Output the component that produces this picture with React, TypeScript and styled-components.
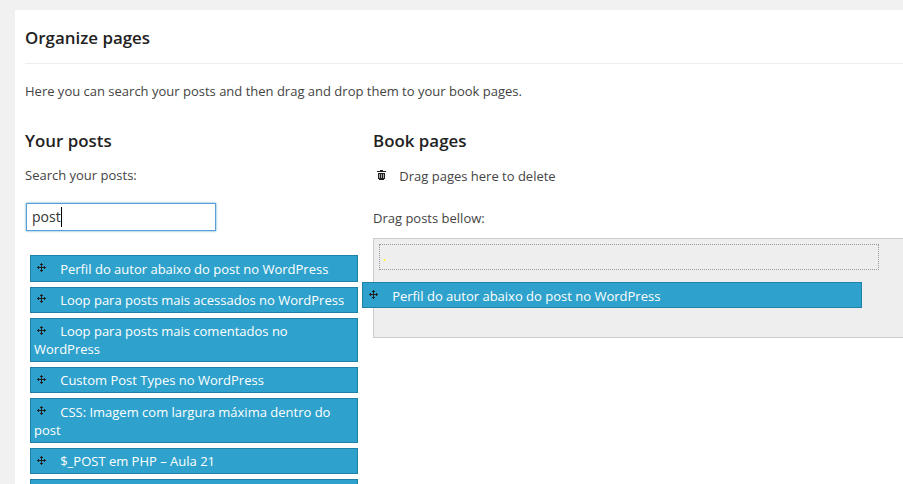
import React from 'react';
import styled, { createGlobalStyle } from 'styled-components';

const GlobalStyle = createGlobalStyle`
  * { box-sizing: border-box; }
  html, body { margin: 0; background: #f1f1f1; overflow: hidden; }
  body { font: 13px/18.2px 'Open Sans', sans-serif; color: #444; }
`;

const Page = styled.div`
  height: 484px;
  padding: 10px 0 0 15px;
  overflow: hidden;
`;

const Panel = styled.main`
  height: 800px;
  padding: 0 0 0 10px;
  background: #fff;
`;

const PanelHeader = styled.header`
  height: 54px;
  padding-top: 16px;
  border-bottom: 1px solid #eee;
`;

const Heading = styled.h2`
  margin: 0;
  color: #222;
  font-size: 16.9px;
  font-weight: 600;
  line-height: 24px;
`;

const Intro = styled.p`
  margin: 18px 0 0;
`;

const Columns = styled.div`
  display: grid;
  grid-template-columns: 333px 1fr;
  column-gap: 15px;
  margin-top: 28.8px;
`;

const Column = styled.section`
  min-width: 0;
`;

const Label = styled.label`
  display: block;
  margin-top: 13px;
`;

const SearchInput = styled.div`
  display: flex;
  align-items: center;
  width: 190px;
  height: 28px;
  margin: 18.8px 0 0 1px;
  padding: 0 5px;
  border: 1px solid #5b9dd9;
  box-shadow: 0 0 2px rgba(30, 140, 190, 0.8);
  color: #333;
  font-size: 14px;
`;

const Caret = styled.span`
  width: 1px;
  height: 20px;
  background: #000;
`;

const PostList = styled.ul`
  display: flex;
  flex-direction: column;
  gap: 5px;
  margin: 24.4px 0 0 5px;
  padding: 0;
  list-style: none;
`;

const PostCard = styled.li`
  min-height: 26.2px;
  padding: 3.23px 3px 2.77px;
  border: 1px solid #1f81a8;
  background: #2ea2cc;
  color: #fff;
  list-style: none;
`;

const Handle = styled.span`
  display: inline-block;
  width: 9px;
  height: 9px;
  margin: 0 10.8px 0 3px;
  vertical-align: 1.4px;
  line-height: 0;
`;

const DeleteRow = styled.div`
  display: flex;
  margin-top: 14px;
`;

const TrashBox = styled.span`
  width: 26.3px;
  padding: 3px 0 0 4px;
  line-height: 0;
`;

const DropLabel = styled.p`
  margin: 23.8px 0 0;
`;

const DropZone = styled.div`
  position: relative;
  height: 100px;
  margin-top: 10.8px;
  padding: 5px;
  border: 1px solid #ccc;
  border-right: 0;
  background: #eee;
`;

const Placeholder = styled.div`
  width: 500px;
  height: 26px;
  padding: 2px 3px;
  border: 1px dotted #999;
  color: #ff0;
  font-weight: 600;
`;

const DraggedCard = styled(PostCard).attrs({ as: 'div' })`
  position: absolute;
  top: 43.4px;
  left: -12px;
  width: 500px;
  height: 26px;
  min-height: 0;
`;

const MoveIcon = () => (
  <Handle>
    <svg width="9" height="9" viewBox="0 0 9 9" shapeRendering="crispEdges" fill="#222">
      <path d="M4 0h1v9H4zM0 4h9v1H0zM3 1h3v1H3zM3 7h3v1H3zM1 3h1v3H1zM7 3h1v3H7z" />
    </svg>
  </Handle>
);

const TrashIcon = () => (
  <svg width="9" height="10" viewBox="0 0 9 10" shapeRendering="crispEdges">
    <path fill="#222" d="M3 0h3v1H3zM0 1h9v1H0zM1 3h7v6H1zM2 9h5v1H2z" />
    <path fill="#aaa" d="M2 4h1v4H2zM4 4h1v4H4zM6 4h1v4H6z" />
  </svg>
);

const posts = [
  'Perfil do autor abaixo do post no WordPress',
  'Loop para posts mais acessados no WordPress',
  'Loop para posts mais comentados no WordPress',
  'Custom Post Types no WordPress',
  'CSS: Imagem com largura máxima dentro do post',
  '$_POST em PHP – Aula 21',
  '',
];

export default function App() {
  return (
    <>
      <GlobalStyle />
      <Page>
        <Panel>
          <PanelHeader>
            <Heading>Organize pages</Heading>
          </PanelHeader>
          <Intro>Here you can search your posts and then drag and drop them to your book pages.</Intro>
          <Columns>
            <Column>
              <Heading>Your posts</Heading>
              <Label>Search your posts:</Label>
              <SearchInput>
                post
                <Caret />
              </SearchInput>
              <PostList>
                {posts.map((title, i) => (
                  <PostCard key={i}>
                    <MoveIcon /> {title}
                  </PostCard>
                ))}
              </PostList>
            </Column>
            <Column>
              <Heading>Book pages</Heading>
              <DeleteRow>
                <TrashBox>
                  <TrashIcon />
                </TrashBox>
                Drag pages here to delete
              </DeleteRow>
              <DropLabel>Drag posts bellow:</DropLabel>
              <DropZone>
                <Placeholder>.</Placeholder>
                <DraggedCard>
                  <MoveIcon /> {posts[0]}
                </DraggedCard>
              </DropZone>
            </Column>
          </Columns>
        </Panel>
      </Page>
    </>
  );
}
